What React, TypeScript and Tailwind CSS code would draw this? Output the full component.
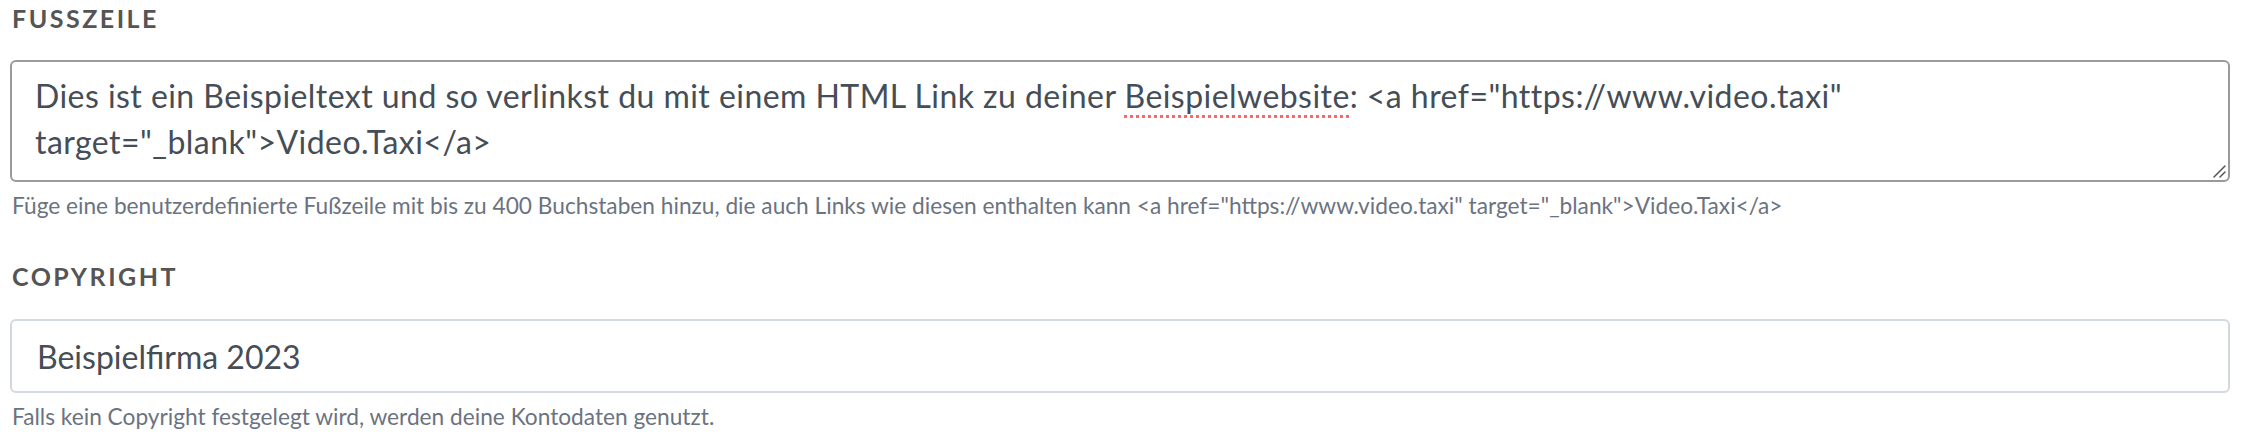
import React from 'react';

const font = { fontFamily: 'Lato, "Noto Sans", sans-serif' };

const Label: React.FC<{ children: React.ReactNode; className?: string }> = ({ children, className }) => (
  <div className={`text-[25px] leading-[28px] font-bold tracking-[2.5px] text-[#555555] ${className ?? ''}`}>
    {children}
  </div>
);

const Help: React.FC<{ children: React.ReactNode; className?: string }> = ({ children, className }) => (
  <p className={`text-[22.7px] leading-[26px] text-[#6b7380] ${className ?? ''}`}>{children}</p>
);

export default function App() {
  return (
    <div className="min-h-screen bg-white pl-[10px] pr-[12px] pt-[4px]" style={font}>
      <Label className="pl-[2px]">FUSSZEILE</Label>

      <div className="relative mt-[28px] rounded-[6px] border-2 border-[#9a9a9a] bg-white pl-[23px] pr-[20px] pt-[11px] pb-[15px] text-[32px] leading-[46px] tracking-[0.45px] text-[#454d57]">
        Dies ist ein Beispieltext und so verlinkst du mit einem HTML Link zu deiner{' '}
        <span className="underline decoration-dotted decoration-[#f36b6b] decoration-[3px] underline-offset-[7px]">
          Beispielwebsite
        </span>
        : &lt;a href="https://www.video.taxi" target="_blank"&gt;Video.Taxi&lt;/a&gt;
        <svg className="absolute bottom-[2px] right-[2px]" width="14" height="14" viewBox="0 0 14 14">
          <path d="M13 2L2 13M13 8L8 13" stroke="#555" strokeWidth="1.5" strokeLinecap="round" />
        </svg>
      </div>
      <Help className="mt-[11px] pl-[2px]">
        Füge eine benutzerdefinierte Fußzeile mit bis zu 400 Buchstaben hinzu, die auch Links wie diesen enthalten kann
        &lt;a href="https://www.video.taxi" target="_blank"&gt;Video.Taxi&lt;/a&gt;
      </Help>

      <Label className="mt-[43px] pl-[2px]">COPYRIGHT</Label>

      <input
        type="text"
        defaultValue="Beispielfirma 2023"
        className="mt-[29px] block h-[74px] w-full rounded-[6px] border-2 border-[#d3d7de] bg-white px-[25px] text-[32px] text-[#454d57] outline-none"
      />
      <Help className="mt-[11px] pl-[2px]">Falls kein Copyright festgelegt wird, werden deine Kontodaten genutzt.</Help>
    </div>
  );
}
